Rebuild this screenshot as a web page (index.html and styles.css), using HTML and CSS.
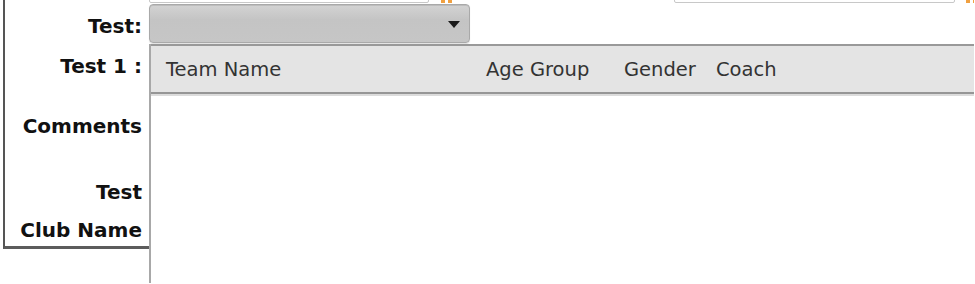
FILE: index.html
```html
<!DOCTYPE html>
<html lang="en">
<head>
    <meta charset="UTF-8">
    <title>Team Picker</title>
    <link rel="stylesheet" href="styles.css">
</head>
<body>
    <div class="form">
        <div class="labels">
            <div class="label label-test">Test:</div>
            <div class="label label-test1">Test 1 :</div>
            <div class="label label-comments">Comments</div>
            <div class="label label-test2">Test</div>
            <div class="label label-club">Club Name</div>
        </div>

        <div class="fields">
            <div class="prev-row">
                <div class="prev-input prev-input-first"></div>
                <span class="req req-first"></span>
                <div class="prev-input prev-input-second"></div>
                <span class="req"></span>
            </div>

            <div class="combo">
                <span class="combo-arrow"></span>
            </div>

            <div class="grid-popup">
                <div class="grid-header">
                    <div class="col">Team Name</div>
                    <div class="col">Age Group</div>
                    <div class="col">Gender</div>
                    <div class="col">Coach</div>
                </div>
                <div class="grid-body"></div>
            </div>
        </div>
    </div>
</body>
</html>
```

FILE: styles.css
```css
html, body {
    margin: 0;
    padding: 0;
    background: #fff;
    overflow: hidden;
}
body {
    font-family: "DejaVu Sans", Verdana, sans-serif;
    color: #111;
}
.form {
    display: flex;
    align-items: flex-start;
    height: 284px;
}

/* label column */
.labels {
    flex-shrink: 0;
    margin-left: 3px;
    width: 144px;
    border-left: 2px solid #555;
    border-bottom: 3px solid #5c5c5c;
    padding-bottom: 4px;
    display: flex;
    flex-direction: column;
}
.label {
    font-size: 20px;
    font-weight: bold;
    line-height: 24px;
    text-align: right;
    padding-right: 7px;
    color: #111;
    white-space: nowrap;
}
.label-test { margin-top: 14px; }
.label-test1 { margin-top: 16px; }
.label-comments { margin-top: 36px; }
.label-test2 { margin-top: 42px; }
.label-club { margin-top: 14px; }

/* right side */
.fields {
    flex: 1;
    min-width: 0;
    margin-right: 1px;
    display: flex;
    flex-direction: column;
}
.prev-row {
    height: 4px;
    overflow: hidden;
    display: flex;
    align-items: flex-end;
}
.prev-input {
    flex-shrink: 0;
    height: 24px;
    border: 1px solid #c8c8c8;
    border-radius: 2px;
    background: #fff;
    margin-bottom: 1px;
}
.prev-input-first { width: 278px; }
.prev-input-second { width: 279px; }
.req {
    flex-shrink: 0;
    width: 11px;
    height: 3px;
    margin-bottom: 1px;
    background: linear-gradient(to right, #f0a040 0, #f0a040 4px, transparent 4px, transparent 7px, #f0a040 7px);
}
.req-first {
    margin-left: 12px;
    margin-right: 222px;
}
.req:last-child { margin-left: 11px; }

.combo {
    width: 319px;
    height: 37px;
    border: 1px solid #a9a9a9;
    border-radius: 4px;
    background: linear-gradient(#d3d3d3, #c4c4c4 40%, #c6c6c6);
    box-shadow: inset 0 1px 0 #bdbdbd, 0 1px 1px rgba(0,0,0,0.12);
    display: flex;
    align-items: center;
    justify-content: flex-end;
}
.combo-arrow {
    width: 0;
    height: 0;
    margin-right: 9px;
    margin-top: 1px;
    border-left: 6px solid transparent;
    border-right: 6px solid transparent;
    border-top: 7px solid #1a1a1a;
}

/* dropdown grid */
.grid-popup {
    margin-top: 1px;
    border-left: 2px solid #a8a8a8;
    height: 239px;
    background: #fff;
}
.grid-header {
    display: grid;
    grid-template-columns: 320px 138px 92px 1fr;
    padding-left: 15px;
    padding-top: 2px;
    height: 44px;
    line-height: 44px;
    background: #e4e4e4;
    border-top: 2px solid #999;
    border-bottom: 2px solid #969696;
    box-shadow: 0 2px 0 #dcdcdc;
    font-size: 19.5px;
    color: #333;
    white-space: nowrap;
}
.grid-body {
    background: #fff;
}
```
